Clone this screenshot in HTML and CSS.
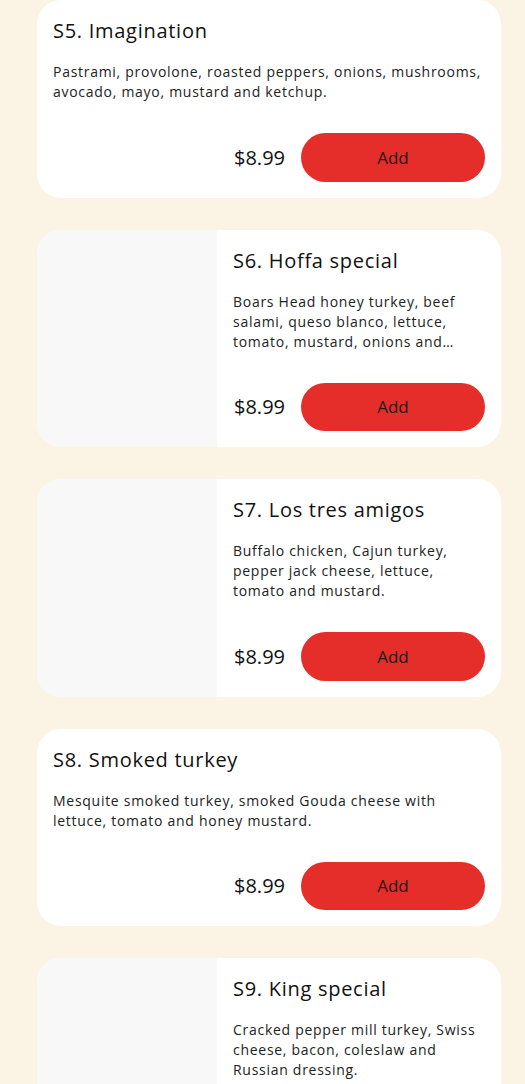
FILE: index.html
```html
<!DOCTYPE html>
<html lang="en">
<head>
  <meta charset="UTF-8">
  <meta name="viewport" content="width=device-width, initial-scale=1.0">
  <title>Sandwiches</title>
  <link rel="stylesheet" href="styles.css">
</head>
<body>
  <div class="menu">
    <div class="item">
      <div class="item-body">
        <h3>S5. Imagination</h3>
        <p>Pastrami, provolone, roasted peppers, onions, mushrooms, avocado, mayo, mustard and ketchup.</p>
        <div class="item-foot">
          <span class="price">$8.99</span>
          <button>Add</button>
        </div>
      </div>
    </div>

    <div class="item has-img">
      <div class="item-img"></div>
      <div class="item-body">
        <h3>S6. Hoffa special</h3>
        <p>Boars Head honey turkey, beef salami, queso blanco, lettuce, tomato, mustard, onions and pickles with oil and vinegar.</p>
        <div class="item-foot">
          <span class="price">$8.99</span>
          <button>Add</button>
        </div>
      </div>
    </div>

    <div class="item has-img">
      <div class="item-img"></div>
      <div class="item-body">
        <h3>S7. Los tres amigos</h3>
        <p>Buffalo chicken, Cajun turkey, pepper jack cheese, lettuce, tomato and mustard.</p>
        <div class="item-foot">
          <span class="price">$8.99</span>
          <button>Add</button>
        </div>
      </div>
    </div>

    <div class="item">
      <div class="item-body">
        <h3>S8. Smoked turkey</h3>
        <p>Mesquite smoked turkey, smoked Gouda cheese with lettuce, tomato and honey mustard.</p>
        <div class="item-foot">
          <span class="price">$8.99</span>
          <button>Add</button>
        </div>
      </div>
    </div>

    <div class="item has-img">
      <div class="item-img"></div>
      <div class="item-body">
        <h3>S9. King special</h3>
        <p>Cracked pepper mill turkey, Swiss cheese, bacon, coleslaw and Russian dressing.</p>
        <div class="item-foot">
          <span class="price">$8.99</span>
          <button>Add</button>
        </div>
      </div>
    </div>
  </div>
</body>
</html>
```

FILE: styles.css
```css
/* Reset y tipografía */
* { box-sizing: border-box; margin: 0; padding: 0; }
body { font-family: 'Open Sans', sans-serif; background: #fbf4e4; color: #111; letter-spacing: 0.045em; }

/* Lista de platos */
.menu { display: flex; flex-direction: column; gap: 32px; padding: 0 24px 40px 37px; }
.item { display: flex; background: #fff; border-radius: 24px; overflow: hidden; }
.item-img { width: 180px; flex-shrink: 0; background: #f8f8f8; }
.item-body { flex: 1; padding: 17px 16px 16px; display: flex; flex-direction: column; }
.item-body h3 { font-size: 20px; font-weight: 400; line-height: 28px; color: #111; }
.item-body p {
  margin-top: 17px; font-size: 14px; line-height: 20px; color: #222;
  display: -webkit-box; -webkit-line-clamp: 3; -webkit-box-orient: vertical; overflow: hidden;
}
.item-foot { margin-top: auto; padding-top: 31px; display: flex; align-items: center; justify-content: flex-end; gap: 16px; }
.price { font-size: 20px; color: #111; letter-spacing: 0; }
.item-foot button {
  width: 184px; height: 48.5px; border: none; border-radius: 25px;
  background: #e52d29; color: #1b1b1b; font-family: inherit; font-size: 17px; font-weight: 500; cursor: pointer;
}
```
